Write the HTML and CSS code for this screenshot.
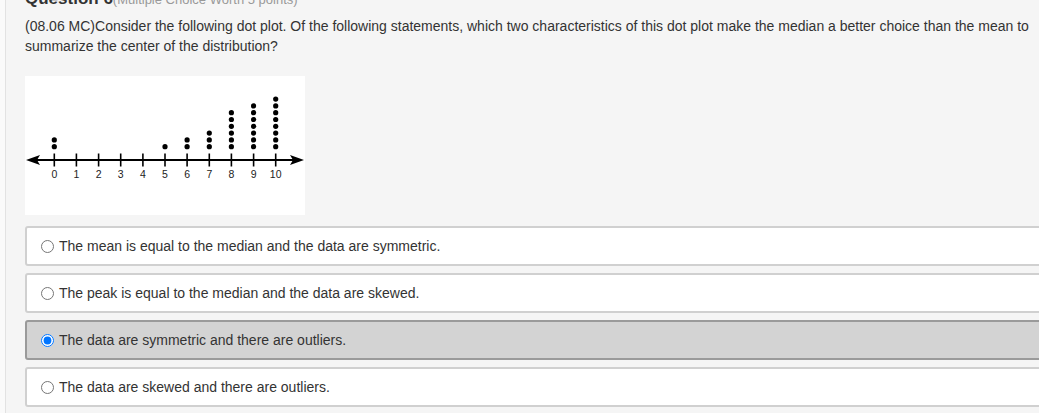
FILE: index.html
```html
<!DOCTYPE html>
<html>
<head>
<meta charset="utf-8">
<link rel="stylesheet" href="styles.css">
</head>
<body>
<div class="page">
  <div class="question">
    <h2 class="q-head">Question 6<span class="q-meta">(Multiple Choice Worth 5 points)</span></h2>
    <p class="q-text">(08.06 MC)Consider the following dot plot. Of the following statements, which two characteristics of this dot plot make the median a better choice than the mean to summarize the center of the distribution?</p>
    <div class="figure">
      <svg width="280" height="139" viewBox="0 0 280 139">
        <g stroke="#000" fill="none">
          <line x1="10" y1="84" x2="270" y2="84" stroke-width="2"/>
          <g stroke-width="1.6">
            <line x1="29.3" y1="77.5" x2="29.3" y2="90.5"/>
            <line x1="51.4" y1="77.5" x2="51.4" y2="90.5"/>
            <line x1="73.6" y1="77.5" x2="73.6" y2="90.5"/>
            <line x1="95.7" y1="77.5" x2="95.7" y2="90.5"/>
            <line x1="117.9" y1="77.5" x2="117.9" y2="90.5"/>
            <line x1="140" y1="77.5" x2="140" y2="90.5"/>
            <line x1="162.1" y1="77.5" x2="162.1" y2="90.5"/>
            <line x1="184.3" y1="77.5" x2="184.3" y2="90.5"/>
            <line x1="206.4" y1="77.5" x2="206.4" y2="90.5"/>
            <line x1="228.6" y1="77.5" x2="228.6" y2="90.5"/>
            <line x1="250.7" y1="77.5" x2="250.7" y2="90.5"/>
          </g>
        </g>
        <path d="M1 84 L15 79 L12 84 L15 89 Z" fill="#000"/>
        <path d="M279 84 L265 79 L268 84 L265 89 Z" fill="#000"/>
        <g fill="#000">
          <circle cx="29.3" cy="70.7" r="2.6"/><circle cx="29.3" cy="63.9" r="2.6"/>
          <circle cx="140" cy="70.7" r="2.6"/>
          <circle cx="162.1" cy="70.7" r="2.6"/><circle cx="162.1" cy="63.9" r="2.6"/>
          <circle cx="184.3" cy="70.7" r="2.6"/><circle cx="184.3" cy="63.9" r="2.6"/><circle cx="184.3" cy="57.1" r="2.6"/>
          <circle cx="206.4" cy="70.7" r="2.6"/><circle cx="206.4" cy="63.9" r="2.6"/><circle cx="206.4" cy="57.1" r="2.6"/><circle cx="206.4" cy="50.3" r="2.6"/><circle cx="206.4" cy="43.5" r="2.6"/><circle cx="206.4" cy="36.7" r="2.6"/>
          <circle cx="228.6" cy="70.7" r="2.6"/><circle cx="228.6" cy="63.9" r="2.6"/><circle cx="228.6" cy="57.1" r="2.6"/><circle cx="228.6" cy="50.3" r="2.6"/><circle cx="228.6" cy="43.5" r="2.6"/><circle cx="228.6" cy="36.7" r="2.6"/><circle cx="228.6" cy="29.9" r="2.6"/>
          <circle cx="250.7" cy="70.7" r="2.6"/><circle cx="250.7" cy="63.9" r="2.6"/><circle cx="250.7" cy="57.1" r="2.6"/><circle cx="250.7" cy="50.3" r="2.6"/><circle cx="250.7" cy="43.5" r="2.6"/><circle cx="250.7" cy="36.7" r="2.6"/><circle cx="250.7" cy="29.9" r="2.6"/><circle cx="250.7" cy="23.1" r="2.6"/>
        </g>
        <g class="axis-labels" text-anchor="middle">
          <text x="29.3" y="102.3">0</text>
          <text x="51.4" y="102.3">1</text>
          <text x="73.6" y="102.3">2</text>
          <text x="95.7" y="102.3">3</text>
          <text x="117.9" y="102.3">4</text>
          <text x="140" y="102.3">5</text>
          <text x="162.1" y="102.3">6</text>
          <text x="184.3" y="102.3">7</text>
          <text x="206.4" y="102.3">8</text>
          <text x="228.6" y="102.3">9</text>
          <text x="250.7" y="102.3">10</text>
        </g>
      </svg>
    </div>
    <div class="options">
      <label class="option"><input type="radio" name="q6" class="radio"><span>The mean is equal to the median and the data are symmetric.</span></label>
      <label class="option"><input type="radio" name="q6" class="radio"><span>The peak is equal to the median and the data are skewed.</span></label>
      <label class="option selected"><input type="radio" name="q6" class="radio" checked><span>The data are symmetric and there are outliers.</span></label>
      <label class="option"><input type="radio" name="q6" class="radio"><span>The data are skewed and there are outliers.</span></label>
    </div>
  </div>
</div>
</body>
</html>
```

FILE: styles.css
```css
html, body {
  margin: 0;
  padding: 0;
  overflow: hidden;
  background: #fafafa;
}
body {
  width: 1039px;
  height: 413px;
  font-family: "Liberation Sans", Arial, sans-serif;
  color: #333;
}
.page {
  margin-left: 5px;
  border-left: 1px solid #e2e2e2;
  background: #f5f5f5;
  height: 413px;
  overflow: hidden;
}
.question {
  padding-left: 19px;
  width: 1100px;
}
.q-head {
  margin: -11px 0 0;
  height: 20px;
  font-size: 17px;
  line-height: 20px;
  font-weight: bold;
  color: #333;
  white-space: nowrap;
}
.q-meta {
  font-size: 13px;
  font-weight: normal;
  color: #999;
}
.q-text {
  margin: 7px 0 0;
  width: 1012px;
  font-size: 14px;
  line-height: 20px;
}
.figure {
  margin-top: 20px;
  width: 280px;
  height: 139px;
  background: #fff;
}
.figure svg {
  display: block;
}
.axis-labels {
  font-family: "Liberation Sans", Arial, sans-serif;
  font-size: 10.5px;
  fill: #222;
}
.options {
  margin-top: 11px;
  display: flex;
  flex-direction: column;
  gap: 7px;
}
.option {
  box-sizing: border-box;
  height: 40px;
  border: 2px solid #d0d0d0;
  border-radius: 3px;
  background: #fff;
  display: flex;
  align-items: center;
  padding-left: 14px;
  font-size: 14px;
  line-height: 20px;
  color: #333;
}
.option.selected {
  background: #d3d3d3;
  border-color: #9a9a9a;
}
.radio {
  width: 13px;
  height: 13px;
  margin: 0 5px 0 0;
  flex: none;
}
```
